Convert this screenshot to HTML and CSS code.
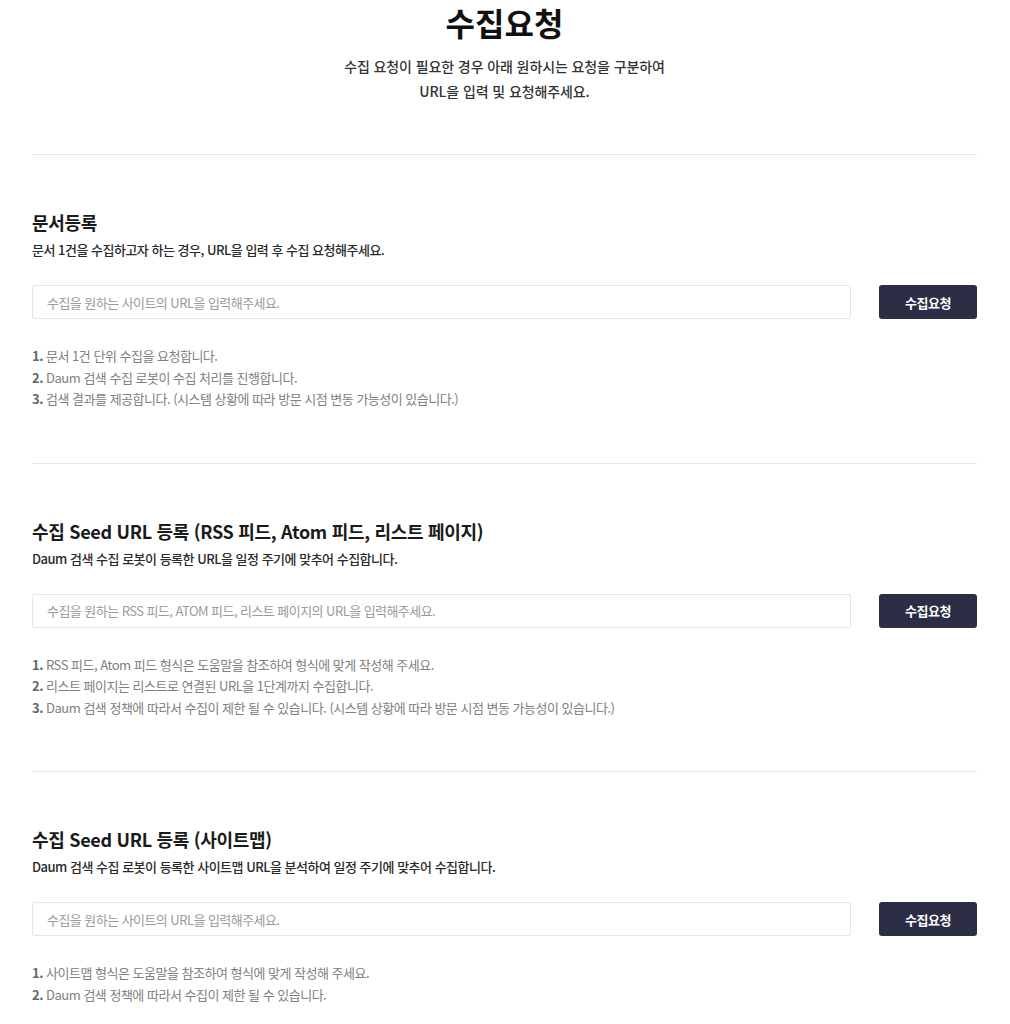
FILE: index.html
```html
<!DOCTYPE html>
<html lang="ko">
<head>
<meta charset="utf-8">
<title>수집요청</title>
<link rel="stylesheet" href="styles.css">
</head>
<body>
<div class="page">
  <header class="top">
    <h1 class="title">수집요청</h1>
    <p class="lead">수집 요청이 필요한 경우 아래 원하시는 요청을 구분하여<br>URL을 입력 및 요청해주세요.</p>
  </header>

  <section class="sec">
    <h2 class="sec-title">문서등록</h2>
    <p class="sec-desc">문서 1건을 수집하고자 하는 경우, URL을 입력 후 수집 요청해주세요.</p>
    <div class="form">
      <input class="field" type="text" placeholder="수집을 원하는 사이트의 URL을 입력해주세요.">
      <button class="btn" type="button">수집요청</button>
    </div>
    <ol class="notes">
      <li><span class="num">1.</span> 문서 1건 단위 수집을 요청합니다.</li>
      <li><span class="num">2.</span> Daum 검색 수집 로봇이 수집 처리를 진행합니다.</li>
      <li><span class="num">3.</span> 검색 결과를 제공합니다. (시스템 상황에 따라 방문 시점 변동 가능성이 있습니다.)</li>
    </ol>
  </section>

  <section class="sec">
    <h2 class="sec-title">수집 Seed URL 등록 (RSS 피드, Atom 피드, 리스트 페이지)</h2>
    <p class="sec-desc">Daum 검색 수집 로봇이 등록한 URL을 일정 주기에 맞추어 수집합니다.</p>
    <div class="form">
      <input class="field" type="text" placeholder="수집을 원하는 RSS 피드, ATOM 피드, 리스트 페이지의 URL을 입력해주세요.">
      <button class="btn" type="button">수집요청</button>
    </div>
    <ol class="notes">
      <li><span class="num">1.</span> RSS 피드, Atom 피드 형식은 도움말을 참조하여 형식에 맞게 작성해 주세요.</li>
      <li><span class="num">2.</span> 리스트 페이지는 리스트로 연결된 URL을 1단계까지 수집합니다.</li>
      <li><span class="num">3.</span> Daum 검색 정책에 따라서 수집이 제한 될 수 있습니다. (시스템 상황에 따라 방문 시점 변동 가능성이 있습니다.)</li>
    </ol>
  </section>

  <section class="sec">
    <h2 class="sec-title">수집 Seed URL 등록 (사이트맵)</h2>
    <p class="sec-desc">Daum 검색 수집 로봇이 등록한 사이트맵 URL을 분석하여 일정 주기에 맞추어 수집합니다.</p>
    <div class="form">
      <input class="field" type="text" placeholder="수집을 원하는 사이트의 URL을 입력해주세요.">
      <button class="btn" type="button">수집요청</button>
    </div>
    <ol class="notes">
      <li><span class="num">1.</span> 사이트맵 형식은 도움말을 참조하여 형식에 맞게 작성해 주세요.</li>
      <li><span class="num">2.</span> Daum 검색 정책에 따라서 수집이 제한 될 수 있습니다.</li>
    </ol>
  </section>
</div>
</body>
</html>
```

FILE: styles.css
```css
* { box-sizing: border-box; }

html, body {
  margin: 0;
  padding: 0;
  background: #ffffff;
}

body {
  font-family: "Noto Sans CJK KR", "Noto Sans", sans-serif;
  color: #222222;
}

.page {
  padding: 0 33px 0 32px;
}

.top {
  text-align: center;
  padding-bottom: 50px;
  border-bottom: 1px solid #e6e6e6;
}

.title {
  margin: 0;
  font-size: 32px;
  line-height: 44px;
  font-weight: 700;
  color: #111111;
}

.lead {
  margin: 10px 0 0;
  font-size: 14px;
  line-height: 25px;
  font-weight: 500;
  color: #333333;
  letter-spacing: -0.1px;
}

.sec {
  padding: 54px 0 53px;
  border-bottom: 1px solid #e6e6e6;
}

.sec:last-child {
  border-bottom: none;
}

.sec-title {
  margin: 0;
  font-size: 18px;
  line-height: 26px;
  font-weight: 700;
  color: #1a1a1a;
  letter-spacing: -0.3px;
}

.sec-desc {
  margin: 5px 0 0;
  font-size: 13px;
  line-height: 20px;
  font-weight: 500;
  color: #2a2a2a;
  letter-spacing: -0.5px;
}

.form {
  display: flex;
  gap: 28px;
  margin-top: 25px;
}

.field {
  flex: 1;
  height: 34px;
  border: 1px solid #e6e6e6;
  border-radius: 2px;
  padding: 0 14px;
  font-family: inherit;
  font-size: 13px;
  color: #333;
  letter-spacing: -0.55px;
  outline: none;
}

.field::placeholder {
  color: #9a9a9a;
}

.btn {
  width: 98px;
  height: 34px;
  border: none;
  border-radius: 3px;
  background: #2c2e45;
  color: #ffffff;
  font-family: inherit;
  font-size: 13px;
  font-weight: 700;
  letter-spacing: -0.5px;
  cursor: pointer;
}

.notes {
  list-style: none;
  margin: 26px 0 0;
  padding: 0;
}

.notes li {
  font-size: 13px;
  line-height: 21.5px;
  color: #808080;
  letter-spacing: -0.5px;
}

.num {
  font-weight: 700;
  color: #666666;
}
```
